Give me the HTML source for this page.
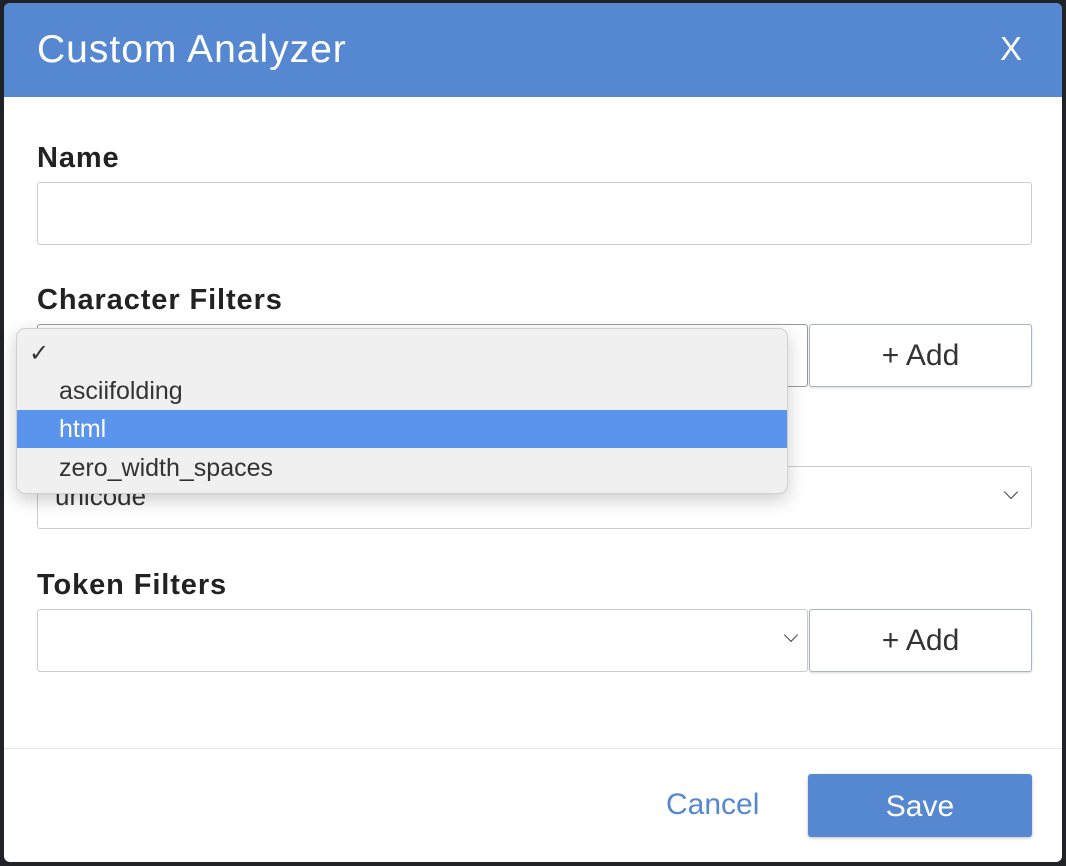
<!DOCTYPE html>
<html><head><style>
body{margin:0;width:1066px;height:866px;background:#1f2328;position:relative;overflow:hidden;font-family:"Liberation Sans",sans-serif}
.dlg{position:absolute;left:4px;top:3px;width:1058px;height:859px;background:#fff;border-radius:6px;overflow:hidden}
.hdr{position:absolute;left:0;top:0;right:0;height:94px;background:#5588d0;color:#fff}
.hdr .t{position:absolute;left:33px;top:25px;font-size:39px;letter-spacing:1px}
.hdr .x{position:absolute;left:996px;top:27px;font-size:33px}
.lbl{position:absolute;left:33px;font-size:29px;font-weight:bold;color:#222;letter-spacing:0.9px}
.box{position:absolute;border:1px solid #ccc;border-radius:3px;background:#fff;box-sizing:border-box}
.btn{position:absolute;border:1px solid #a9b3c2;border-radius:3px;background:#fff;box-sizing:border-box;text-align:center;font-size:30px;color:#333;line-height:62px;box-shadow:0 1px 2px rgba(0,0,0,.15)}
.chev{position:absolute;width:9px;height:9px;border-right:1.5px solid #444;border-bottom:1.5px solid #444;transform:rotate(45deg)}
.pop{position:absolute;left:16px;top:328px;width:772px;height:166px;background:#f0f0f0;border:1px solid #d0d0d0;border-radius:9px;box-shadow:0 6px 18px rgba(0,0,0,.2);font-size:25px;color:#333;overflow:hidden;box-sizing:border-box}
.it{position:absolute;left:42px}
</style></head><body>
<div class="dlg">
<div class="hdr"><div class="t">Custom Analyzer</div><div class="x">X</div></div>
<div class="lbl" style="top:139px">Name</div>
<div class="box" style="left:33px;top:179px;width:995px;height:63px"></div>
<div class="lbl" style="top:281px">Character Filters</div>
<div class="box" style="left:33px;top:321px;width:771px;height:63px;border-color:#999"></div>
<div class="btn" style="left:805px;top:321px;width:223px;height:63px">+ Add</div>
<div class="box" style="left:33px;top:463px;width:995px;height:63px"><span style="position:absolute;left:17px;top:14px;font-size:26px;color:#333">unicode</span><div class="chev" style="left:968px;top:20px"></div></div>
<div class="lbl" style="top:566px">Token Filters</div>
<div class="box" style="left:33px;top:606px;width:771px;height:63px"><div class="chev" style="left:748px;top:20px"></div></div>
<div class="btn" style="left:805px;top:606px;width:223px;height:63px">+ Add</div>
<div style="position:absolute;left:0;right:0;top:745px;height:1px;background:#e6e6e6"></div>
<div style="position:absolute;left:662px;top:785px;font-size:30px;color:#5588d0">Cancel</div>
<div style="position:absolute;left:804px;top:771px;width:224px;height:63px;background:#5588d0;border-radius:3px;color:#fff;font-size:30px;text-align:center;line-height:65px;box-shadow:0 1px 3px rgba(0,0,0,.25)">Save</div>
</div>
<div class="pop">
<div style="position:absolute;left:12px;top:10px;font-size:24px">✓</div>
<div class="it" style="top:48px">asciifolding</div>
<div style="position:absolute;left:0;right:0;top:81px;height:38px;background:#5b94ed"></div>
<div class="it" style="top:86px;color:#fff">html</div>
<div class="it" style="top:125px">zero_width_spaces</div>
</div>
</body></html>
